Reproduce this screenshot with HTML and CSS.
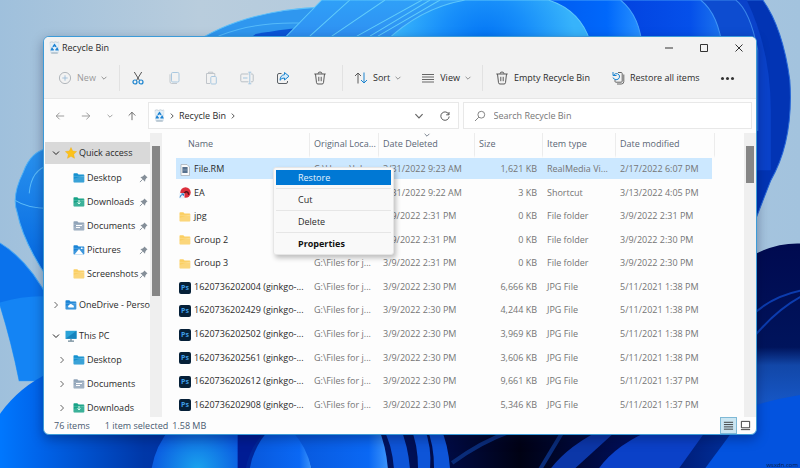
FILE: index.html
```
<!DOCTYPE html>
<html lang="en">
<head>
  <meta charset="UTF-8">
  <meta name="viewport" content="width=device-width, initial-scale=1.0">
  <title>Recycle Bin</title>
  <link rel="stylesheet" href="styles.css">
</head>
<body>
  <!-- icon sprite -->
  <svg class="sprite" aria-hidden="true">
    <symbol id="i-bin" viewBox="0 0 12 14">
      <path d="M1 1.500h10l-1 11.500H2z" fill="#e4eff7" stroke="#cddae3" stroke-width=".6"/>
      <path d="M1 1.500l2-1 2 1 2-1 2 1 1.500-.8" fill="none" stroke="#b3c4cf" stroke-width=".6"/>
      <path d="M4.300 6.300L6 4l1.700 2.300M8.400 7.200l1 2.300H7M5.200 9.500H2.800l1-2.300" fill="none" stroke="#1c83d4" stroke-width="1.700"/>
      <path d="M2.500 13h7" stroke="#8da3b2"/>
    </symbol>
    <symbol id="i-down" viewBox="0 0 10 10"><path d="M2 3.500l3 3 3-3" fill="none" stroke="currentColor"/></symbol>
    <symbol id="i-right" viewBox="0 0 10 10"><path d="M3.500 2l3 3-3 3" fill="none" stroke="currentColor"/></symbol>
    <symbol id="i-plus" viewBox="0 0 14 14">
      <circle cx="7" cy="7" r="5.600" fill="none" stroke="#aab0b6" stroke-width=".9"/>
      <path d="M7 4.300v5.400M4.300 7h5.400" stroke="#9cbcd8" stroke-width=".9"/>
    </symbol>
    <symbol id="i-cut" viewBox="0 0 14 14">
      <path d="M3.300 1l5.300 8.600M10.700 1L5.400 9.600" stroke="#555" fill="none"/>
      <circle cx="4" cy="11" r="2" fill="none" stroke="#1a83cf" stroke-width="1.200"/>
      <circle cx="10" cy="11" r="2" fill="none" stroke="#1a83cf" stroke-width="1.200"/>
    </symbol>
    <symbol id="i-copy" viewBox="0 0 14 14">
      <rect x="4.500" y="1.500" width="7.500" height="9.500" rx="1.200" fill="none" stroke="#a9c8e0"/>
      <path d="M3 3.300v7.500q0 1.700 1.700 1.700H10" fill="none" stroke="#c3c8cd"/>
    </symbol>
    <symbol id="i-paste" viewBox="0 0 14 14">
      <path d="M6 12.500H2.500v-10h8.300V5M4.500 2.500V1.200h4.300v1.300" fill="none" stroke="#c0c5ca"/>
      <rect x="6.800" y="5.500" width="5.500" height="7.500" rx="1" fill="none" stroke="#a9c8e0"/>
    </symbol>
    <symbol id="i-rename" viewBox="0 0 14 14">
      <path d="M8.500 3H1.800q-1 0-1 1v5.800q0 1 1 1h6.700M11 3h1.200q1 0 1 1v5.800q0 1-1 1H11" fill="none" stroke="#b9c0c6"/>
      <path d="M3 7h4.500M9.800 1.200v11.600M8.300 1.200h3M8.300 12.800h3" fill="none" stroke="#a3c6e0"/>
    </symbol>
    <symbol id="i-share" viewBox="0 0 14 14">
      <path d="M5.500 2.500H3Q1.500 2.500 1.500 4v7q0 1.500 1.500 1.500h7q1.500 0 1.500-1.500v-1" fill="none" stroke="#5c6166"/>
      <path d="M8.500 1.500L13 5.200 8.500 9V7Q5.500 6.800 4 9.300 4.300 4 8.500 3.700z" fill="#d9edfb" stroke="#1a83cf" stroke-linejoin="round"/>
    </symbol>
    <symbol id="i-trash" viewBox="0 0 14 14">
      <path d="M1.300 3h11.400M5 2.800Q5 1 7 1t2 1.800M2.500 3l1 8.700Q3.600 13 5 13h4q1.400 0 1.500-1.300l1-8.700M5.800 5.800v4.400M8.200 5.800v4.400" fill="none" stroke="#5a5a5a"/>
    </symbol>
    <symbol id="i-sort" viewBox="0 0 14 14">
      <path d="M4 12.500V2M1 5l3-3 3 3" fill="none" stroke="#5a5a5a"/>
      <path d="M10 1.500V12M7 9l3 3 3-3" fill="none" stroke="#1a83cf"/>
    </symbol>
    <symbol id="i-view" viewBox="0 0 14 14"><path d="M1 3.500h12M1 6h12M1 8.500h12M1 11h12" stroke="#666"/></symbol>
    <symbol id="i-restore" viewBox="0 0 14 14">
      <path d="M7 1.500h3.200q1 0 1 1v7.700q0 1-1 1H5M12.800 3.500v7q0 2.500-2.500 2.500H6M4 9v1.500q0 .7 1 .7" fill="none" stroke="#666"/>
      <path d="M2 1v3.500h3.500M2.300 4.300Q4 2 6.500 2.700q2.500 1 2 3.500-.8 2.600-3.500 2.600Q2.800 8.500 2 6.500" fill="none" stroke="#1a83cf"/>
    </symbol>
    <symbol id="i-arrow" viewBox="0 0 12 12"><path d="M11 6H1.500M5.500 2l-4 4 4 4" fill="none" stroke="currentColor"/></symbol>
    <symbol id="i-refresh" viewBox="0 0 12 12"><path d="M10 2v2.800H7.200M9.900 4.500A4.200 4.200 0 1 0 10.200 6.500" fill="none" stroke="#5a5a5a"/></symbol>
    <symbol id="i-search" viewBox="0 0 12 12">
      <circle cx="7.300" cy="4.700" r="3.400" fill="none" stroke="#777" stroke-width=".9"/>
      <path d="M4.800 7.200L1 11" stroke="#777" stroke-width=".9"/>
    </symbol>
    <symbol id="i-star" viewBox="0 0 12 12"><path d="M6 .5l1.700 3.600 3.900.5-2.900 2.700.8 4L6 9.300l-3.500 2 .8-4L.4 4.600l3.900-.5z" fill="#fcc21b" stroke="#f0ac12" stroke-width=".4"/></symbol>
    <symbol id="i-folder" viewBox="0 0 12 12">
      <path d="M.5 2q0-.8.800-.8h3l1.200 1.300h5q.8 0 .8.800v6.400q0 .8-.8.800H1.300q-.8 0-.8-.8z" fill="currentColor"/>
      <path d="M.5 4.300h10.800" stroke="#fff" stroke-opacity=".35" stroke-width=".6"/>
      <path d="M.5 7v2.700q0 .8.800.8h9.200q.8 0 .8-.8V3.300z" fill="#fff" fill-opacity=".16"/>
    </symbol>
    <symbol id="i-pc" viewBox="0 0 12 12">
      <rect x=".5" y=".8" width="11" height="8" fill="#2aa3d8"/>
      <path d="M.5 8.800L11.500.8v8z" fill="#1683bd"/>
      <path d="M6 8.800v2M3 11.200h6" stroke="#6d8797" stroke-width="1.200"/>
    </symbol>
    <symbol id="i-pin" viewBox="0 0 10 10">
      <path d="M6 .5L9.500 4 8.300 4.500 7 6.300 6.700 8.500 1.500 3.300l2-.3L5.300 1.800z" fill="#858f99"/>
      <path d="M4 6L1 9" stroke="#858f99"/>
    </symbol>
    <symbol id="i-rm" viewBox="0 0 12 12">
      <path d="M2 .5h6l2.500 2.500v8.500H2z" fill="#fafafa" stroke="#a2a9b0" stroke-width=".7"/>
      <rect x="3.500" y="3" width="5" height="6" fill="#3a5676"/>
      <path d="M5 3v6M7 3v6M3.500 6h5" stroke="#9db4ca" stroke-width=".6"/>
    </symbol>
    <symbol id="i-ea" viewBox="0 0 12 12">
      <circle cx="6.500" cy="5.500" r="5.200" fill="#dc2f3c"/>
      <path d="M5 6.500Q7 3.500 9 5.500l.8 2.200" stroke="#5c1119" fill="none" stroke-width="1.400"/>
      <path d="M0 6h5.500v5.500H0z" fill="#eef4fa"/>
      <path d="M1 10.500q0-3 3-3M2.500 6.800h2v2" stroke="#1c75c4" fill="none" stroke-width=".9"/>
    </symbol>
  </svg>

  <svg class="wallpaper" viewBox="0 0 800 468" preserveAspectRatio="xMidYMid slice" aria-hidden="true">
    <defs>
      <linearGradient id="sky" x1="0" y1="0" x2="1" y2="0"><stop offset="0" stop-color="#9fc0dc"/><stop offset=".25" stop-color="#b9cddd"/><stop offset="1" stop-color="#a3c3de"/></linearGradient>
      <radialGradient id="dome" gradientUnits="userSpaceOnUse" cx="485" cy="45" r="90"><stop offset="0" stop-color="#0072f5"/><stop offset=".5" stop-color="#188ffa"/><stop offset="1" stop-color="#37b3fb"/></radialGradient>
      <linearGradient id="p1" x1="0" y1="0" x2="1" y2="0"><stop offset="0" stop-color="#0050e8"/><stop offset=".75" stop-color="#0068fb"/><stop offset="1" stop-color="#2a93ff"/></linearGradient>
      <linearGradient id="p2" x1="0" y1="0" x2="1" y2="0"><stop offset="0" stop-color="#0038d8"/><stop offset=".8" stop-color="#0550ea"/><stop offset="1" stop-color="#1d75ee"/></linearGradient>
      <linearGradient id="strip" x1="0" y1="0" x2="0" y2="1"><stop offset="0" stop-color="#2fa0f8"/><stop offset="1" stop-color="#2f8cf0"/></linearGradient>
      <linearGradient id="low" x1="0" y1="0" x2="1" y2="0"><stop offset="0" stop-color="#0078ff"/><stop offset=".05" stop-color="#0064ea"/><stop offset=".18" stop-color="#0038a8"/><stop offset=".3" stop-color="#0028a0"/><stop offset=".55" stop-color="#000c48"/><stop offset=".65" stop-color="#000214"/><stop offset=".8" stop-color="#001060"/><stop offset="1" stop-color="#0048c8"/></linearGradient>
      <radialGradient id="glow" gradientUnits="userSpaceOnUse" cx="198" cy="468" r="48"><stop offset="0" stop-color="#1aa3ee"/><stop offset="1" stop-color="#0a58e0"/></radialGradient>
      <linearGradient id="leaf" x1="0" y1="0" x2="0" y2="1"><stop offset="0" stop-color="#2a92ee"/><stop offset="1" stop-color="#0064e0"/></linearGradient>
      <linearGradient id="ray" x1="0" y1="0" x2="1" y2="0"><stop offset="0" stop-color="#0858dc"/><stop offset=".8" stop-color="#0a68f4"/><stop offset="1" stop-color="#3c94fa"/></linearGradient>
      <linearGradient id="side" x1="0" y1="0" x2="0" y2="1"><stop offset="0" stop-color="#000a50"/><stop offset=".46" stop-color="#00145c"/><stop offset=".54" stop-color="#1247a8"/><stop offset=".7" stop-color="#1656c4"/><stop offset="1" stop-color="#0048d8"/></linearGradient>
    </defs>
    <rect width="800" height="468" fill="url(#sky)"/>
    <!-- upper petals, back to front -->
    <path d="M600 0h162Q782 28 789 80q4 60-19 100l-14 36H600z" fill="#0234b4" stroke="#2768d8"/>
    <path d="M600 0h146q24 50 24 110v60H600z" fill="#0a42ca"/>
    <path d="M600 0h135q14 10 22 50v80H600z" fill="#0d4cd0" stroke="#3a86ea"/>
    <path d="M560 0h140q18 14 22 50H560z" fill="url(#p2)" stroke="#3f94f6"/>
    <path d="M500 0h120q20 16 22 50H500z" fill="url(#p1)" stroke="#45a2fb"/>
    <path d="M190 46Q240 10 325 7v39z" fill="#2f97ef" stroke="#5bc0fa"/>
    <path d="M240 46l16-12q34-6 50-6v18z" fill="#0a55d8"/>
    <path d="M219 36q34-14 80-13" fill="none" stroke="#55baf9"/>
    <path d="M277 46L322 0h200v46z" fill="url(#strip)" stroke="#5cc6fb"/>
    <path d="M310 36L350 0M332 36L385 0M357 36L422 0M370 36L430 0M378 36L440 0" fill="none" stroke="#61cdfb"/>
    <path d="M385 42Q420 8 465 0h83q32 10 42 42z" fill="url(#dome)" stroke="#5cc6fb"/>
    <!-- left edge -->
    <path d="M50 148q-18 2-26 24-12 24-6 40 6 30 32 68z" fill="url(#leaf)" stroke="#4fb0f5"/>
    <path d="M16 200q12 8 34 8M50 165q-18 4-20 28" fill="none" stroke="#5dbcf8"/>
    <path d="M0 242q30 18 50 58v80H20Q12 340 0 302z" fill="#0a72ec" stroke="#3ea2f5"/>
    <path d="M0 302q28-8 50-6v84H20Q12 340 0 302z" fill="#1484f4"/>
    <!-- lower petals -->
    <path d="M0 414q20-28 50-42l750 50v46H0z" fill="url(#low)"/>
    <path d="M152 468q4-24 20-42h78l-10 42z" fill="url(#glow)"/>
    <path d="M238 426h32q-20 18-24 42h-8z" fill="#001c94"/>
    <path d="M250 468q4-24 22-42h20q16 18 20 42z" fill="url(#ray)"/>
    <path d="M292 430q14 14 20 38h76q-2-24-10-42h-86z" fill="url(#ray)"/>
    <path d="M382 426q10 16 12 42h16q-2-24-10-42zM410 426q8 16 8 42h12q2-22-6-42zM426 426q8 16 8 42h16q-2-26-10-42z" fill="#0e55d8"/>
    <path d="M452 462q30-22 60-32M540 468l24-40" fill="none" stroke="#0a2c78" stroke-width="4"/>
    <path d="M550 468q18-24 56-42h14l-46 42z" fill="#0c37a8"/>
    <path d="M598 468q18-26 60-42h50l-30 42z" fill="#0b41c8"/>
    <!-- right edge -->
    <path d="M750 256q24-14 50-13v225h-90l40-42z" fill="url(#side)"/>
    <path d="M750 316q20-20 50-26M750 340q24-30 50-44" fill="none" stroke="#0c3cae" stroke-width="2"/>
    <path d="M750 406q24-8 50-12v74h-96z" fill="#0353df"/>
  </svg>
  <div class="watermark">wsxdn.com</div>

  <main class="window">
    <header class="titlebar">
      <svg class="bin-icon"><use href="#i-bin"/></svg>
      <h1>Recycle Bin</h1>
      <div class="window-controls">
        <button aria-label="Minimize"><svg viewBox="0 0 10 10"><path d="M1 5h8" stroke="#333"/></svg></button>
        <button aria-label="Maximize"><svg viewBox="0 0 10 10"><path d="M1.500 1.500h7v7h-7z" fill="none" stroke="#333"/></svg></button>
        <button aria-label="Close"><svg viewBox="0 0 10 10"><path d="M1.500 1.500l7 7M8.500 1.500l-7 7" stroke="#333"/></svg></button>
      </div>
    </header>

    <div class="toolbar">
      <button class="tool tool-new" disabled><svg><use href="#i-plus"/></svg>New<svg class="chev"><use href="#i-down"/></svg></button>
      <div class="tool-icons">
        <button aria-label="Cut"><svg><use href="#i-cut"/></svg></button>
        <button aria-label="Copy" disabled><svg><use href="#i-copy"/></svg></button>
        <button aria-label="Paste" disabled><svg><use href="#i-paste"/></svg></button>
        <button aria-label="Rename" disabled><svg><use href="#i-rename"/></svg></button>
        <button aria-label="Share"><svg><use href="#i-share"/></svg></button>
        <button aria-label="Delete"><svg><use href="#i-trash"/></svg></button>
      </div>
      <div class="tool-menus">
        <button class="tool"><svg><use href="#i-sort"/></svg>Sort<svg class="chev"><use href="#i-down"/></svg></button>
        <button class="tool"><svg><use href="#i-view"/></svg>View<svg class="chev"><use href="#i-down"/></svg></button>
      </div>
      <div class="tool-actions">
        <button class="tool"><svg><use href="#i-trash"/></svg>Empty Recycle Bin</button>
        <button class="tool"><svg><use href="#i-restore"/></svg>Restore all items</button>
        <button class="more" aria-label="See more"><span></span><span></span><span></span></button>
      </div>
    </div>

    <div class="navbar">
      <div class="nav-buttons">
        <button aria-label="Back"><svg><use href="#i-arrow"/></svg></button>
        <button aria-label="Forward"><svg class="forward"><use href="#i-arrow"/></svg></button>
        <button class="narrow" aria-label="Recent"><svg class="chev"><use href="#i-down"/></svg></button>
        <button class="narrow up" aria-label="Up"><svg><use href="#i-arrow"/></svg></button>
      </div>
      <div class="address">
        <svg class="bin-icon"><use href="#i-bin"/></svg>
        <svg class="chev"><use href="#i-right"/></svg>
        <a href="#">Recycle Bin</a>
        <svg class="chev"><use href="#i-right"/></svg>
        <button class="history" aria-label="Previous locations"><svg><use href="#i-down"/></svg></button>
        <button aria-label="Refresh"><svg><use href="#i-refresh"/></svg></button>
      </div>
      <label class="search">
        <svg><use href="#i-search"/></svg>
        <input type="text" placeholder="Search Recycle Bin" aria-label="Search Recycle Bin">
      </label>
    </div>

    <div class="content">
      <nav class="sidebar">
        <a href="#" class="root active"><svg class="chev"><use href="#i-down"/></svg><svg><use href="#i-star"/></svg>Quick access</a>
        <a href="#" class="child"><svg class="desktop"><use href="#i-folder"/></svg>Desktop<svg class="pin"><use href="#i-pin"/></svg></a>
        <a href="#" class="child"><svg class="downloads" viewBox="0 0 12 12"><use href="#i-folder"/><path d="M6 4v4M4.500 6.500L6 8l1.500-1.500" stroke="#d6fbee" fill="none"/></svg>Downloads<svg class="pin"><use href="#i-pin"/></svg></a>
        <a href="#" class="child"><svg class="documents" viewBox="0 0 12 12"><use href="#i-folder"/><path d="M3 5.500h6M3 7.500h4" stroke="#fff"/></svg>Documents<svg class="pin"><use href="#i-pin"/></svg></a>
        <a href="#" class="child"><svg class="pictures" viewBox="0 0 12 12"><use href="#i-folder"/><path d="M1.500 10.500L6 5l4.500 5.500z" fill="#fff"/><path d="M8 3.500h1.500V5H8z" fill="#fff"/></svg>Pictures<svg class="pin"><use href="#i-pin"/></svg></a>
        <a href="#" class="child"><svg class="folder"><use href="#i-folder"/></svg>Screenshots<svg class="pin"><use href="#i-pin"/></svg></a>
        <a href="#" class="root"><svg class="chev"><use href="#i-right"/></svg><svg class="onedrive" viewBox="0 0 12 12"><use href="#i-folder"/><path d="M3.500 8.500q-1.300-1.600.5-2.200Q5.500 3.700 7.600 6q1.900.2 1.200 2.500z" fill="#fff"/></svg>OneDrive - Perso</a>
        <a href="#" class="root open"><svg class="chev"><use href="#i-down"/></svg><svg><use href="#i-pc"/></svg>This PC</a>
        <a href="#" class="child"><svg class="chev"><use href="#i-right"/></svg><svg class="desktop"><use href="#i-folder"/></svg>Desktop</a>
        <a href="#" class="child"><svg class="chev"><use href="#i-right"/></svg><svg class="documents" viewBox="0 0 12 12"><use href="#i-folder"/><path d="M3 5.500h6M3 7.500h4" stroke="#fff"/></svg>Documents</a>
        <a href="#" class="child"><svg class="chev"><use href="#i-right"/></svg><svg class="downloads" viewBox="0 0 12 12"><use href="#i-folder"/><path d="M6 4v4M4.500 6.500L6 8l1.500-1.500" stroke="#d6fbee" fill="none"/></svg>Downloads</a>
      </nav>
      <div class="scrollbar"><div class="thumb thumb-nav"></div></div>

      <section class="files">
        <table>
          <colgroup>
            <col><col class="col-location"><col class="col-deleted"><col class="col-size"><col class="col-type"><col class="col-modified">
          </colgroup>
          <thead>
            <tr>
              <th>Name</th>
              <th>Original Loca...</th>
              <th class="sorted">Date Deleted<svg><use href="#i-down"/></svg></th>
              <th>Size</th>
              <th>Item type</th>
              <th>Date modified</th>
            </tr>
          </thead>
          <tbody>
            <tr class="selected"><td><svg><use href="#i-rm"/></svg>File.RM</td><td>C:\Users\Jel...</td><td>3/31/2022 9:23 AM</td><td>1,621 KB</td><td>RealMedia Vi...</td><td>2/17/2022 6:07 PM</td></tr>
            <tr><td><svg><use href="#i-ea"/></svg>EA</td><td></td><td>3/31/2022 9:22 AM</td><td>3 KB</td><td>Shortcut</td><td>3/13/2022 4:05 PM</td></tr>
            <tr><td><svg class="folder"><use href="#i-folder"/></svg>jpg</td><td></td><td>3/9/2022 2:31 PM</td><td>0 KB</td><td>File folder</td><td>3/9/2022 2:31 PM</td></tr>
            <tr><td><svg class="folder"><use href="#i-folder"/></svg>Group 2</td><td></td><td>3/9/2022 2:31 PM</td><td>0 KB</td><td>File folder</td><td>3/9/2022 2:30 PM</td></tr>
            <tr><td><svg class="folder"><use href="#i-folder"/></svg>Group 3</td><td>G:\Files for j...</td><td>3/9/2022 2:31 PM</td><td>0 KB</td><td>File folder</td><td>3/9/2022 2:30 PM</td></tr>
            <tr><td><span class="ps">Ps</span>1620736202004 (ginkgo-...</td><td>G:\Files for j...</td><td>3/9/2022 2:30 PM</td><td>6,666 KB</td><td>JPG File</td><td>5/11/2021 1:38 PM</td></tr>
            <tr><td><span class="ps">Ps</span>1620736202429 (ginkgo-...</td><td>G:\Files for j...</td><td>3/9/2022 2:30 PM</td><td>4,244 KB</td><td>JPG File</td><td>5/11/2021 1:38 PM</td></tr>
            <tr><td><span class="ps">Ps</span>1620736202502 (ginkgo-...</td><td>G:\Files for j...</td><td>3/9/2022 2:30 PM</td><td>3,969 KB</td><td>JPG File</td><td>5/11/2021 1:38 PM</td></tr>
            <tr><td><span class="ps">Ps</span>1620736202561 (ginkgo-...</td><td>G:\Files for j...</td><td>3/9/2022 2:30 PM</td><td>3,606 KB</td><td>JPG File</td><td>5/11/2021 1:38 PM</td></tr>
            <tr><td><span class="ps">Ps</span>1620736202612 (ginkgo-...</td><td>G:\Files for j...</td><td>3/9/2022 2:30 PM</td><td>9,661 KB</td><td>JPG File</td><td>5/11/2021 1:37 PM</td></tr>
            <tr><td><span class="ps">Ps</span>1620736202908 (ginkgo-...</td><td>G:\Files for j...</td><td>3/9/2022 2:30 PM</td><td>5,346 KB</td><td>JPG File</td><td>5/11/2021 1:37 PM</td></tr>
          </tbody>
        </table>

        <div class="context-menu" role="menu">
          <button role="menuitem" class="current">Restore</button>
          <button role="menuitem">Cut</button>
          <button role="menuitem">Delete</button>
          <button role="menuitem" class="default">Properties</button>
        </div>
      </section>
      <div class="scrollbar"><div class="thumb thumb-files"></div></div>
    </div>

    <footer class="statusbar">
      <span class="count">76 items</span>
      <span>1 item selected</span>
      <span>1.58 MB</span>
      <div class="view-switch">
        <button class="on" aria-label="Details view"><svg viewBox="0 0 12 12"><path d="M1 2.500h10M1 5h10M1 7.500h10M1 10h10" stroke="#333"/></svg></button>
        <button aria-label="Large icons view"><svg viewBox="0 0 12 12"><path d="M1.500 1.500h9v7h-9zM1 10.500h10" fill="none" stroke="#333"/></svg></button>
      </div>
    </footer>
  </main>
</body>
</html>
```
FILE: styles.css
```
* {
  margin: 0;
  padding: 0;
  box-sizing: border-box;
}

body {
  position: relative;
  display: flex;
  min-height: 100vh;
  padding: 36px 43px 34px;
  overflow: hidden;
  font-family: "Open Sans", "Segoe UI", sans-serif;
  font-size: 9px;
  line-height: 14px;
  color: #2b2b2b;
}

button {
  display: flex;
  align-items: center;
  justify-content: center;
  border: none;
  background: none;
  font: inherit;
  color: inherit;
}

a {
  color: inherit;
  text-decoration: none;
}

svg {
  flex: none;
  width: 14px;
  height: 14px;
}

.sprite {
  position: absolute;
  width: 0;
  height: 0;
}

.wallpaper {
  position: absolute;
  inset: 0;
  width: 100%;
  height: 100%;
}

.watermark {
  position: absolute;
  right: 2px;
  bottom: 0;
  font-size: 6px;
  line-height: 8px;
  color: #0a1c48;
}

.window {
  position: relative;
  flex: 1;
  min-width: 0;
  display: flex;
  flex-direction: column;
  background: #fdfdfd;
  border: 1px solid #3c9bd8;
  border-radius: 6px;
  box-shadow: 0 4px 12px rgba(0, 10, 50, 0.35);
  overflow: hidden;
}

.bin-icon {
  width: 11px;
  height: 13px;
}

.chev {
  width: 10px;
  height: 10px;
}

/* title bar and toolbar */
.titlebar {
  display: flex;
  align-items: center;
  height: 21px;
  padding-left: 5px;
  gap: 2px;
  background: #f2f2f2;
}

.titlebar h1 {
  font-size: 9px;
  font-weight: 400;
}

.window-controls {
  display: flex;
  margin-left: auto;
}

.window-controls button {
  width: 35px;
  height: 21px;
}

.window-controls svg {
  width: 10px;
  height: 10px;
}

.toolbar {
  display: flex;
  align-items: center;
  height: 41px;
  background: #f2f2f2;
  border-bottom: 1px solid #e6e6e6;
}

.tool {
  gap: 5px;
}

.tool .chev {
  width: 8px;
  height: 8px;
  margin-left: -1px;
  color: #777;
}

.tool-new {
  width: 75px;
  padding-left: 3px;
  color: #9a9a9a;
}

.tool-icons,
.tool-menus,
.tool-actions {
  display: flex;
  align-items: center;
  height: 26px;
  border-left: 1px solid #e2e2e2;
}

.tool-icons {
  width: 223px;
  padding-right: 4px;
}

.tool-icons button {
  flex: 1;
}

.tool-menus {
  width: 140px;
  padding-left: 11px;
  gap: 19px;
}

.tool-actions {
  flex: 1;
  padding-left: 12px;
  gap: 21px;
}

.more {
  gap: 2px;
}

.more span {
  width: 3px;
  height: 3px;
  border-radius: 50%;
  background: #333;
}

/* navigation */
.navbar {
  display: flex;
  align-items: center;
  height: 33px;
  padding: 0 4px 0 3px;
}

.nav-buttons {
  display: flex;
  margin-right: 5px;
  color: #8a8a8a;
}

.nav-buttons button {
  width: 26px;
  height: 20px;
}

.nav-buttons .narrow {
  width: 22px;
}

.nav-buttons svg {
  width: 10px;
  height: 10px;
}

.nav-buttons .chev {
  width: 8px;
  height: 8px;
}

.nav-buttons .forward {
  transform: rotate(180deg);
}

.nav-buttons .up {
  color: #555;
}

.nav-buttons .up svg {
  transform: rotate(90deg);
}

.address,
.search {
  display: flex;
  align-items: center;
  height: 27px;
  border: 1px solid #e8e8e8;
  background: #fff;
}

.address {
  flex: 311;
  margin-right: 4px;
  padding: 0 5px;
  gap: 3px;
}

.address .chev {
  width: 8px;
  height: 8px;
}

.address .history {
  margin-left: auto;
  color: #666;
}

.address button {
  width: 16px;
}

.address .history + button {
  margin-left: 7px;
}

.address button svg {
  width: 12px;
  height: 12px;
}

.search {
  flex: 289;
  padding-left: 10px;
  gap: 8px;
}

.search svg {
  width: 12px;
  height: 12px;
}

.search input {
  flex: 1;
  min-width: 0;
  border: none;
  outline: none;
  background: none;
  font: inherit;
}

.search input::placeholder {
  color: #777;
}

/* sidebar */
.content {
  flex: 1;
  display: flex;
  min-height: 0;
}

.sidebar {
  width: 106px;
  height: 284px;
  padding: 10px 0 0 1px;
  overflow: hidden;
  white-space: nowrap;
}

.sidebar a {
  display: flex;
  align-items: center;
  height: 24px;
}

.sidebar svg {
  width: 12px;
  height: 12px;
  margin-right: 2px;
}

.sidebar .chev {
  width: 10px;
  height: 10px;
  margin-right: 4px;
  color: #666;
}

.sidebar .root {
  margin-top: 7px;
  padding-left: 6px;
}

.sidebar .active {
  height: 22px;
  margin: 0 0 2px;
  background: #d9d9d9;
}

.sidebar .active .chev,
.sidebar .open .chev {
  color: #222;
}

.sidebar .child {
  padding-left: 28px;
}

.sidebar .child:has(.chev) {
  padding-left: 12px;
}

.sidebar .child .chev {
  margin-right: 6px;
}

.sidebar .pin {
  width: 9px;
  height: 9px;
  margin: 0 2px 0 auto;
}

.desktop {
  color: #1591d0;
}

.downloads {
  color: #16a286;
}

.documents {
  color: #8fa3b8;
}

.pictures,
.onedrive {
  color: #1a84d6;
}

.folder {
  color: #fbcf62;
}

.scrollbar {
  width: 12px;
  margin-top: 1px;
  padding: 13px 2px;
  background: #efefef;
}

.thumb {
  background: #868686;
}

.thumb-nav {
  height: 150px;
}

.thumb-files {
  height: 37px;
}

/* file list */
.files {
  position: relative;
  flex: 1;
  min-width: 0;
  padding: 1px 29px 0 14px;
}

table {
  width: 100%;
  height: 284px;
  table-layout: fixed;
  border-collapse: separate;
  border-spacing: 0;
  white-space: nowrap;
}

.col-location {
  width: 69px;
}

.col-deleted {
  width: 96px;
}

.col-size {
  width: 68px;
}

.col-type {
  width: 73px;
}

.col-modified {
  width: 99px;
}

th {
  position: relative;
  height: 25px;
  padding-left: 4px;
  border-right: 1px solid #ececec;
  border-bottom: 3px solid #fdfdfd;
  font-weight: 400;
  text-align: left;
  color: #5a6675;
}

th:first-child {
  padding-left: 12px;
}

.sorted svg {
  position: absolute;
  top: -2px;
  left: 44px;
  width: 8px;
  height: 8px;
}

td {
  padding: 2px 0 0 4px;
  border-bottom: 3px solid transparent;
  background-clip: padding-box;
  color: #757575;
}

td:first-child {
  padding-left: 3px;
  color: #2b2b2b;
}

td:nth-child(4) {
  padding-right: 6px;
  text-align: right;
}

td:last-child {
  border-right: 3px solid transparent;
}

.selected td {
  background-color: #cce8ff;
}

td svg,
.ps {
  display: inline-block;
  width: 12px;
  height: 12px;
  margin-right: 3px;
  vertical-align: middle;
}

.ps {
  border-radius: 2px;
  background: #062038;
  font-size: 7px;
  font-weight: 700;
  line-height: 11px;
  text-align: center;
  color: #3f9fe8;
}

.context-menu {
  position: absolute;
  top: 35px;
  left: 111px;
  width: 121px;
  padding: 1px 2px 0;
  border: 1px solid #e6e6e6;
  border-radius: 3px;
  background: #f9f9f9;
  box-shadow: 2px 3px 5px rgba(0, 0, 0, 0.25);
}

.context-menu button {
  justify-content: flex-start;
  width: 100%;
  height: 22px;
  padding-left: 22px;
  border-top: 1px solid #e6e6e6;
}

.context-menu .current {
  height: 15px;
  margin: 1px 0 3px;
  border: none;
  background: #0078d4;
  color: #e4f2fd;
}

.context-menu .default {
  font-weight: 700;
  color: #111;
}

/* status bar */
.statusbar {
  display: flex;
  align-items: center;
  height: 17px;
  padding-left: 10px;
  gap: 4px;
  color: #4a5a70;
}

.statusbar .count {
  margin-right: 11px;
}

.view-switch {
  display: flex;
  margin-left: auto;
  padding-right: 2px;
}

.view-switch button {
  width: 17px;
  height: 17px;
}

.view-switch .on {
  border: 1px solid #7fb9d6;
  background: #cbe6f2;
}

.view-switch svg {
  width: 11px;
  height: 11px;
}
```
